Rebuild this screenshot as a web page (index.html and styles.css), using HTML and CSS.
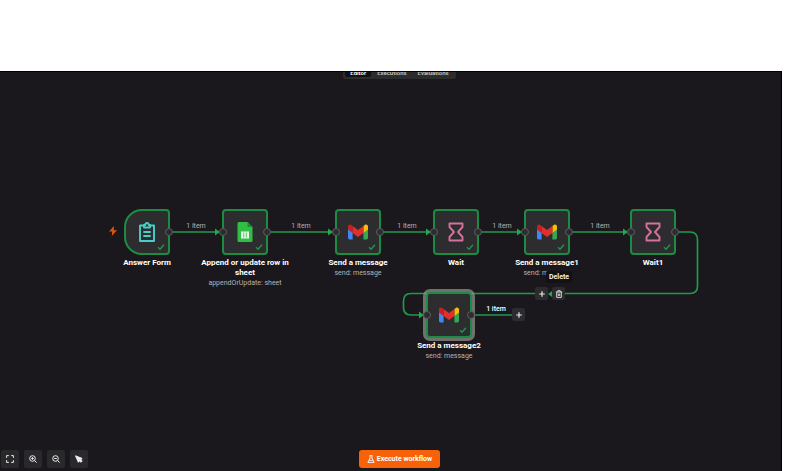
FILE: index.html
```html
<!DOCTYPE html>
<html lang="en">
<head>
    <meta charset="UTF-8">
    <meta name="viewport" content="width=device-width, initial-scale=1.0">
    <title>Workflow Editor</title>
    <link rel="stylesheet" href="styles.css">
</head>
<body>

    <!-- shared icons -->
    <svg class="symbols" aria-hidden="true">
        <symbol id="check" viewBox="0 0 8 8">
            <path d="M1 4.3 L3 6.3 L7 1.8" fill="none" stroke="#1f9a48" stroke-width="1.3"/>
        </symbol>
        <symbol id="gmail" viewBox="0 0 20 15">
            <path fill="#4285f4" d="M0 4 L4.6 7.4 V15 H1.4 A1.4 1.4 0 0 1 0 13.6Z"/>
            <path fill="#34a853" d="M20 4 L15.4 7.4 V15 H18.6 A1.4 1.4 0 0 0 20 13.6Z"/>
            <path fill="#fbbc04" d="M15.4 1.4 L16.8 .4 C18.2 -.6 20 .4 20 2 V5 L15.4 8.4Z"/>
            <path fill="#c5221f" d="M0 2 C0 .4 1.8 -.6 3.2 .4 L4.6 1.4 V8.4 L0 5Z"/>
            <path fill="#e02f2f" d="M4.6 1.4 L10 5.4 L15.4 1.4 V8.4 L10 12.4 L4.6 8.4Z"/>
        </symbol>
        <symbol id="hourglass" viewBox="0 0 16 20">
            <path d="M1.5 1.5 H14.5 V5 L10 10 L14.5 15 V18.5 H1.5 V15 L6 10 L1.5 5Z" fill="none" stroke="#d5719a" stroke-width="1.9" stroke-linejoin="round"/>
        </symbol>
        <symbol id="plus" viewBox="0 0 8 8">
            <path d="M4 1.2 V6.8 M1.2 4 H6.8" stroke="#e8e8e8" stroke-width="1.2"/>
        </symbol>
    </svg>

    <main class="editor">
        <nav class="tabs">
            <div class="tab-list">
                <a href="#editor" class="tab active">Editor</a>
                <a href="#executions" class="tab">Executions</a>
                <a href="#evaluations" class="tab">Evaluations</a>
            </div>
        </nav>

        <section class="canvas">
            <svg class="edges" width="782" height="400" aria-hidden="true">
                <g fill="none" stroke="#1f9a48" stroke-width="1.7">
                    <path d="M170 160 H218"/>
                    <path d="M268 160 H331"/>
                    <path d="M381 160 H429"/>
                    <path d="M479 160 H520"/>
                    <path d="M570 160 H626"/>
                    <path d="M676 160 H690 Q697.500 160 697.500 168 V214 Q697.500 221.500 690 221.500 H411 Q403.500 221.500 403.500 229 V235.500 Q403.500 243 411 243 H421"/>
                    <path d="M472 243 H515"/>
                </g>
                <g fill="#22a94f">
                    <path d="M215 156.500 L220 160 L215 163.500Z"/>
                    <path d="M328 156.500 L333 160 L328 163.500Z"/>
                    <path d="M426 156.500 L431 160 L426 163.500Z"/>
                    <path d="M517 156.500 L522 160 L517 163.500Z"/>
                    <path d="M623 156.500 L628 160 L623 163.500Z"/>
                    <path d="M419 239.500 L424 243 L419 246.500Z"/>
                </g>
            </svg>

            <svg class="trigger" viewBox="0 0 8 10" aria-hidden="true"><path fill="#d9570f" d="M5 0 L0 5.600 H3.200 L2.800 10 L8 4.200 H4.800Z"/></svg>

            <span class="edge-label label-1">1 item</span>
            <span class="edge-label label-2">1 item</span>
            <span class="edge-label label-3">1 item</span>
            <span class="edge-label label-4">1 item</span>
            <span class="edge-label label-5">1 item</span>
            <span class="edge-label label-6">1 item</span>

            <article class="node node-form">
                <div class="box start">
                    <svg class="icon" viewBox="0 0 16 20"><g fill="none" stroke="#45d0c8" stroke-width="1.900" stroke-linejoin="round"><path d="M5 3.500 H1 V19 H15 V3.500 H11"/><path d="M5 5.500 V3 H6.200 Q6.500 1 8 1 Q9.500 1 9.800 3 H11 V5.500Z"/><path d="M4.300 10 H11.700 M4.300 14 H11.700"/></g></svg>
                    <svg class="check"><use href="#check"/></svg>
                    <i class="port out"></i>
                </div>
                <h2>Answer Form</h2>
            </article>

            <article class="node node-sheet">
                <div class="box">
                    <i class="port in"></i>
                    <svg class="icon" viewBox="0 0 15 20"><path fill="#2fc043" d="M1.500 0 H10 L15 5 V18.500 Q15 20 13.500 20 H1.500 Q0 20 0 18.500 V1.500 Q0 0 1.500 0Z"/><path fill="#1a8f31" d="M10 0 L15 5 H10Z"/><path fill="#e9f8eb" d="M3.500 9.500 H11.500 V16.500 H3.500Z"/><path stroke="#2fc043" stroke-width=".8" d="M6.200 10.500 V15.500 M8.800 10.500 V15.500"/></svg>
                    <svg class="check"><use href="#check"/></svg>
                    <i class="port out"></i>
                </div>
                <h2>Append or update row in sheet</h2>
                <p>appendOrUpdate: sheet</p>
            </article>

            <article class="node node-message">
                <div class="box">
                    <i class="port in"></i>
                    <svg class="icon"><use href="#gmail"/></svg>
                    <svg class="check"><use href="#check"/></svg>
                    <i class="port out"></i>
                </div>
                <h2>Send a message</h2>
                <p>send: message</p>
            </article>

            <article class="node node-wait">
                <div class="box">
                    <i class="port in"></i>
                    <svg class="icon"><use href="#hourglass"/></svg>
                    <svg class="check"><use href="#check"/></svg>
                    <i class="port out"></i>
                </div>
                <h2>Wait</h2>
            </article>

            <article class="node node-message1">
                <div class="box">
                    <i class="port in"></i>
                    <svg class="icon"><use href="#gmail"/></svg>
                    <svg class="check"><use href="#check"/></svg>
                    <i class="port out"></i>
                </div>
                <h2>Send a message1</h2>
                <p>send: message</p>
            </article>

            <article class="node node-wait1">
                <div class="box">
                    <i class="port in"></i>
                    <svg class="icon"><use href="#hourglass"/></svg>
                    <svg class="check"><use href="#check"/></svg>
                    <i class="port out"></i>
                </div>
                <h2>Wait1</h2>
            </article>

            <article class="node node-message2">
                <div class="box selected">
                    <i class="port in"></i>
                    <svg class="icon"><use href="#gmail"/></svg>
                    <svg class="check"><use href="#check"/></svg>
                    <i class="port out"></i>
                </div>
                <h2>Send a message2</h2>
                <p>send: message</p>
            </article>

            <div class="edge-tools">
                <button type="button" class="mini" aria-label="Add node"><svg><use href="#plus"/></svg></button>
                <svg class="arrow" viewBox="0 0 4 6" aria-hidden="true"><path fill="#22a94f" d="M4 0 L0 3 L4 6Z"/></svg>
                <button type="button" class="mini" aria-label="Delete"><svg viewBox="0 0 8 8"><path fill="none" stroke="#e8e8e8" stroke-width=".9" d="M.8 2 H7.200 M2.800 2 V.7 H5.200 V2 M1.700 2 V7.400 H6.300 V2 M3.300 3.500 V6 M4.700 3.500 V6"/></svg></button>
            </div>
            <span class="tooltip">Delete</span>
            <button type="button" class="mini add-next" aria-label="Add next node"><svg><use href="#plus"/></svg></button>
        </section>

        <footer class="controls">
            <div class="zoom">
                <button type="button" aria-label="Fit view"><svg viewBox="0 0 8 8"><path d="M.6 2.800 V.6 H2.800 M5.200 .6 H7.400 V2.800 M7.400 5.200 V7.400 H5.200 M2.800 7.400 H.6 V5.200"/></svg></button>
                <button type="button" aria-label="Zoom in"><svg viewBox="0 0 8 8"><circle cx="3.500" cy="3.500" r="2.800"/><path d="M5.500 5.500 L7.600 7.600 M2.200 3.500 H4.800 M3.500 2.200 V4.800"/></svg></button>
                <button type="button" aria-label="Zoom out"><svg viewBox="0 0 8 8"><circle cx="3.500" cy="3.500" r="2.800"/><path d="M5.500 5.500 L7.600 7.600 M2.200 3.500 H4.800"/></svg></button>
                <button type="button" aria-label="Tidy up"><svg viewBox="0 0 8 8"><path fill="#eee" d="M.5 .8 L7.200 3.500 L5.800 4.500 L7.200 6 L5.900 7.300 L4.500 5.800 L3.400 7.300Z"/></svg></button>
            </div>
            <button type="button" class="execute"><svg viewBox="0 0 8 8"><path d="M2.500 .6 H5.500 M3.100 .6 V3 L.9 7.400 H7.100 L4.900 3 V.6 M2 5.300 H6"/></svg>Execute workflow</button>
        </footer>
    </main>

</body>
</html>
```

FILE: styles.css
```css
* {
    box-sizing: border-box;
}

body {
    display: flex;
    flex-direction: column;
    min-height: 100vh;
    margin: 0;
    padding: 71px 18px 0 0;
    background-color: #fff;
    font-family: Roboto, sans-serif;
    color: #fff;
}

button {
    display: flex;
    align-items: center;
    justify-content: center;
    padding: 0;
    border: none;
    font-family: inherit;
    color: inherit;
    cursor: pointer;
}

.symbols {
    position: absolute;
    width: 0;
    height: 0;
}

.editor {
    flex: 1;
    display: flex;
    flex-direction: column;
    position: relative;
    overflow: hidden;
    background-color: #1a181c;
    border: 1px solid #000;
    border-left: none;
    border-bottom: none;
}

/* top tabs, half scrolled out of view */
.tabs {
    display: flex;
    justify-content: center;
    height: 7px;
    padding-left: 18px;
    align-items: flex-end;
}

.tab-list {
    display: flex;
    gap: 1px;
    padding: 2px;
    background-color: #2c2b2e;
    border-radius: 2px;
}

.tab {
    padding: 0 5px;
    border-radius: 2px;
    font-size: 6px;
    line-height: 8px;
    font-weight: 600;
    color: #c4c4c4;
    text-decoration: none;
}

.tab.active {
    background-color: #111012;
    color: #fff;
}

.canvas {
    flex: 1;
}

.edges {
    position: absolute;
    top: 0;
    left: 0;
}

.trigger {
    position: absolute;
    top: 154px;
    left: 109px;
    width: 8px;
    height: 10px;
}

.edge-label {
    position: absolute;
    top: 149px;
    width: 30px;
    text-align: center;
    font-size: 7px;
    line-height: 10px;
    color: #b4b3b6;
}

.label-1 { left: 181px; }
.label-2 { left: 286px; }
.label-3 { left: 392px; }
.label-4 { left: 487px; }
.label-5 { left: 585px; }

.label-6 {
    top: 232px;
    left: 481px;
    font-weight: 500;
    color: #fff;
}

.node {
    position: absolute;
    top: 137px;
    display: flex;
    flex-direction: column;
    align-items: center;
    width: 96px;
    text-align: center;
}

.node-form { left: 99px; }
.node-sheet { left: 197px; }
.node-message { left: 310px; }
.node-wait { left: 408px; }
.node-message1 { left: 499px; }
.node-wait1 { left: 605px; }
.node-message2 { top: 220px; left: 401px; }

.box {
    position: relative;
    display: flex;
    align-items: center;
    justify-content: center;
    width: 46px;
    height: 46px;
    margin-bottom: 3px;
    background-color: #2d2c2f;
    border: 2px solid #1c8c42;
    border-radius: 4px;
}

.box.start {
    border-radius: 18px 4px 4px 18px;
}

.box.selected {
    box-shadow: 0 0 0 3px rgba(150, 150, 150, 0.7);
}

.icon {
    width: 20px;
    height: 20px;
}

.check {
    position: absolute;
    right: 3px;
    bottom: 2px;
    width: 8px;
    height: 8px;
}

.port {
    position: absolute;
    top: 17px;
    width: 8px;
    height: 8px;
    background-color: #2d2c2f;
    border: 1px solid #5d5c60;
    border-radius: 50%;
}

.port.in { left: -5px; }
.port.out { right: -5px; }

.node h2 {
    margin: 0;
    font-size: 8px;
    line-height: 10px;
    font-weight: 700;
}

.node p {
    margin: 0;
    font-size: 7px;
    line-height: 10px;
    color: #b4b3b6;
}

.mini {
    width: 13px;
    height: 13px;
    background-color: #2c2b2e;
    border-radius: 2px;
}

.mini svg {
    width: 8px;
    height: 8px;
}

.edge-tools {
    position: absolute;
    top: 215px;
    left: 535px;
    display: flex;
    align-items: center;
    background-color: #1a181c;
}

.edge-tools .arrow {
    width: 4px;
    height: 6px;
}

.tooltip {
    position: absolute;
    top: 199px;
    left: 546px;
    padding: 0 3px;
    background-color: #121113;
    border-radius: 2px;
    font-size: 7px;
    line-height: 12px;
    font-weight: 600;
}

.add-next {
    position: absolute;
    top: 236px;
    left: 512px;
}

.controls {
    display: grid;
    grid-template-columns: 1fr auto 1fr;
    align-items: center;
    padding: 0 0 3px 18px;
}

.zoom {
    display: flex;
    gap: 5px;
    margin-left: -17px;
}

.zoom button {
    width: 18px;
    height: 18px;
    background-color: #29282b;
    border-radius: 2px;
}

.zoom svg,
.execute svg {
    width: 8px;
    height: 8px;
    fill: none;
    stroke: #eee;
    stroke-width: 1;
}

.execute {
    gap: 2px;
    height: 18px;
    padding: 0 8px;
    background-color: #f76208;
    border-radius: 3px;
    font-size: 7px;
    font-weight: 700;
}
```
